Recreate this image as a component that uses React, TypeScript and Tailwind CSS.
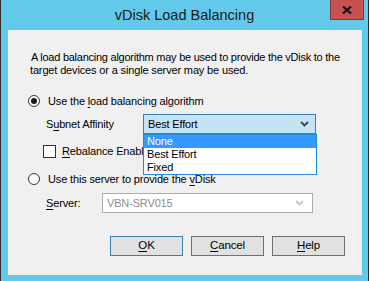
import type { ReactNode } from 'react'

const font = { fontFamily: '"Liberation Sans", Arial, sans-serif' }

const Chevron = ({ color }: { color: string }) => (
  <svg width="9" height="6" viewBox="0 0 9 6" fill="none">
    <path d="M1 1l3.5 3.5L8 1" stroke={color} strokeWidth="1.9" />
  </svg>
)

const Radio = ({ checked }: { checked?: boolean }) => (
  <span className="grid h-[12px] w-[12px] place-items-center rounded-full border border-[#333] bg-white">
    {checked && <span className="h-[6px] w-[6px] rounded-full bg-[#1a1a1a]" />}
  </span>
)

const Button = ({ children, isDefault }: { children: ReactNode; isDefault?: boolean }) => (
  <button
    className={
      isDefault
        ? 'flex h-[20px] w-[73px] items-center justify-center border border-[#3c7fb1] bg-[#e1e1e1] text-[11.5px] text-black'
        : 'flex h-[20px] w-[73px] items-center justify-center border border-[#707070] bg-[#e1e1e1] text-[11.5px] text-black'
    }
  >
    {children}
  </button>
)

export default function App() {
  return (
    <div className="flex h-[281px] w-[369px] flex-col border-x border-x-[#2d2d2d] bg-[#63c9ea]" style={font}>
      <div className="grid h-[30px] grid-cols-[1fr_auto_1fr]">
        <div />
        <div className="pt-[5px] text-[14.5px] leading-[20px] text-[#1b1b1b]">vDisk Load Balancing</div>
        <div className="flex justify-end pr-[4px]">
          <div className="flex h-[20px] w-[34px] items-center justify-center border border-t-0 border-[#8a3030] bg-[#c75050]">
            <svg width="10" height="8" viewBox="0 0 10 8">
              <path d="M1 0.5l8 7M9 0.5l-8 7" stroke="#111" strokeWidth="2.2" />
            </svg>
          </div>
        </div>
      </div>

      <div className="ml-[7px] mr-[6px] flex h-[245px] flex-col bg-[#f0f0f0] text-[11px] tracking-[-0.15px] text-black">
        <div className="ml-[22px] mt-[21px] leading-[13px]">
          <div className="ml-[1px] whitespace-nowrap tracking-[-0.25px]">
            A load balancing algorithm may be used to provide the vDisk to the
          </div>
          <div className="whitespace-nowrap">target devices or a single server may be used.</div>
        </div>

        <div className="ml-[20px] mt-[17px] flex items-center gap-[8px] leading-[14px]">
          <Radio checked />
          <span>
            Use the <u className="underline-offset-[2px]">l</u>oad balancing algorithm
          </span>
        </div>

        <div className="relative ml-[38px] mt-[6px] flex items-center">
          <span className="w-[97px]">
            S<u className="underline-offset-[2px]">u</u>bnet Affinity
          </span>
          <div className="flex h-[20px] w-[173px] items-center justify-between border border-[#3c7fb1] bg-[#c4e3f5] pl-[4px] pr-[6px]">
            <span>Best Effort</span>
            <Chevron color="#444" />
          </div>
          <div className="absolute left-[97px] top-[20px] z-10 flex w-[174px] flex-col border border-[#1e8fd3] bg-white leading-[13px]">
            <div className="bg-[#3399ff] pl-[3px] text-white">None</div>
            <div className="pl-[3px]">Best Effort</div>
            <div className="pl-[3px]">Fixed</div>
          </div>
        </div>

        <div className="ml-[35px] mt-[10px] flex items-center gap-[6px] leading-[14px]">
          <span className="h-[13px] w-[13px] border border-[#333] bg-white" />
          <span>
            <u className="underline-offset-[2px]">R</u>ebalance Enabled
          </span>
        </div>

        <div className="ml-[20px] mt-[14px] flex items-center gap-[8px] leading-[14px]">
          <Radio />
          <span>
            Use this server to provide the <u className="underline-offset-[2px]">v</u>Disk
          </span>
        </div>

        <div className="ml-[38px] mt-[7px] flex items-center">
          <span className="w-[56px]">
            <u className="underline-offset-[2px]">S</u>erver:
          </span>
          <div className="flex h-[20px] w-[211px] items-center justify-between border border-[#adadad] bg-white pl-[4px] pr-[8px] text-[#8d8d8d]">
            <span>VBN-SRV015</span>
            <Chevron color="#c4c4c4" />
          </div>
        </div>

        <div className="ml-[102px] mt-[23px] flex gap-[8px]">
          <Button isDefault>
            <u className="underline-offset-[2px]">O</u>K
          </Button>
          <Button>
            <u className="underline-offset-[2px]">C</u>ancel
          </Button>
          <Button>
            <u className="underline-offset-[2px]">H</u>elp
          </Button>
        </div>
      </div>
    </div>
  )
}
